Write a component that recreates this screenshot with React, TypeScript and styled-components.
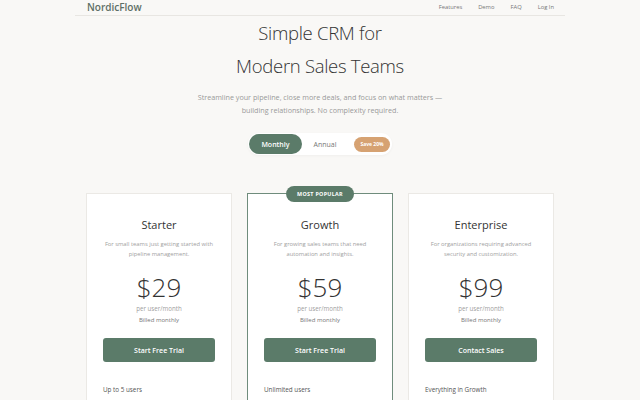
import React from "react";
import styled, { createGlobalStyle } from "styled-components";

const GlobalStyle = createGlobalStyle`
    * { box-sizing: border-box; }
    body {
        margin: 0;
        background: #f9f8f6;
        font-family: "Open Sans", "Noto Sans", sans-serif;
        color: #333;
    }
`;

interface IPlan {
    name: string,
    description: string,
    price: string,
    cta: string,
    feature: string,
    featured?: boolean
}

const plans: IPlan[] = [
    {
        name: "Starter",
        description: "For small teams just getting started with pipeline management.",
        price: "$29",
        cta: "Start Free Trial",
        feature: "Up to 5 users"
    },
    {
        name: "Growth",
        description: "For growing sales teams that need automation and insights.",
        price: "$59",
        cta: "Start Free Trial",
        feature: "Unlimited users",
        featured: true
    },
    {
        name: "Enterprise",
        description: "For organizations requiring advanced security and customization.",
        price: "$99",
        cta: "Contact Sales",
        feature: "Everything in Growth"
    }
];

const App: React.FC = () => {
    return (
        <>
            <GlobalStyle />
            <Page>
                <Nav>
                    <Logo>NordicFlow</Logo>
                    <NavLinks>
                        <NavLink>Features</NavLink>
                        <NavLink>Demo</NavLink>
                        <NavLink>FAQ</NavLink>
                        <NavLink>Log In</NavLink>
                    </NavLinks>
                </Nav>
                <Title>Simple CRM for<br />Modern Sales Teams</Title>
                <Subtitle>
                    Streamline your pipeline, close more deals, and focus on what matters —<br />
                    building relationships. No complexity required.
                </Subtitle>
                <Toggle>
                    <ToggleOption active>Monthly</ToggleOption>
                    <ToggleOption>Annual</ToggleOption>
                    <SaveBadge>Save 20%</SaveBadge>
                </Toggle>
                <Cards>
                    {plans.map((plan) => (
                        <Card key={plan.name} featured={plan.featured}>
                            {plan.featured && <PopularBadge>MOST POPULAR</PopularBadge>}
                            <PlanName>{plan.name}</PlanName>
                            <PlanDesc>{plan.description}</PlanDesc>
                            <Price>{plan.price}</Price>
                            <PriceUnit>per user/month</PriceUnit>
                            <Billed>Billed monthly</Billed>
                            <CtaButton>{plan.cta}</CtaButton>
                            <Feature>{plan.feature}</Feature>
                        </Card>
                    ))}
                </Cards>
            </Page>
        </>
    )
}

const Page = styled.div`
    display: flex;
    flex-direction: column;
    align-items: center;
    height: 400px;
    overflow: hidden;
`

const Nav = styled.nav`
    width: 490px;
    height: 17px;
    display: flex;
    align-items: center;
    justify-content: space-between;
    padding: 0 11px 1px 12px;
    border-bottom: 1px solid #e8e6e2;
`

const Logo = styled.div`
    font-size: 10px;
    font-weight: 600;
    color: #5e6f66;
`

const NavLinks = styled.div`
    display: flex;
    gap: 16px;
`

const NavLink = styled.span`
    font-size: 5.8px;
    color: #777;
`

const Title = styled.h1`
    margin: 0;
    font-size: 18.5px;
    font-weight: 300;
    line-height: 33px;
    text-align: center;
    color: #333;
    letter-spacing: -0.3px;
`

const Subtitle = styled.p`
    margin: 9px 0 0;
    font-size: 7.2px;
    line-height: 13px;
    text-align: center;
    color: #9a9a9a;
`

const Toggle = styled.div`
    margin-top: 16px;
    display: flex;
    align-items: center;
    height: 22px;
    padding: 1px 2px 1px 1px;
    background: #fff;
    border-radius: 11px;
    box-shadow: 0 1px 3px rgba(0, 0, 0, 0.04);
`

const ToggleOption = styled.div<{ active?: boolean }>`
    height: 20px;
    display: flex;
    align-items: center;
    justify-content: center;
    padding: 0 12px;
    border-radius: 10px;
    font-size: 7px;
    font-weight: ${(p) => (p.active ? 600 : 400)};
    color: ${(p) => (p.active ? "#fff" : "#777")};
    background: ${(p) => (p.active ? "#5b7b69" : "transparent")};
    min-width: ${(p) => (p.active ? "50px" : "0")};
`

const SaveBadge = styled.div`
    margin-left: 6px;
    height: 15px;
    display: flex;
    align-items: center;
    padding: 0 6px;
    border-radius: 8px;
    background: #d6a272;
    color: #fff;
    font-size: 5px;
    font-weight: 700;
`

const Cards = styled.div`
    margin-top: 38px;
    display: grid;
    grid-template-columns: repeat(3, 146px);
    gap: 15px;
`

const Card = styled.div<{ featured?: boolean }>`
    position: relative;
    display: flex;
    flex-direction: column;
    align-items: center;
    padding: 23px 16px 6px;
    background: #fff;
    border: 1px solid ${(p) => (p.featured ? "#6f8c7c" : "#ebe9e5")};
    height: 230px;
`

const PopularBadge = styled.div`
    position: absolute;
    top: -8px;
    left: 50%;
    transform: translateX(-50%);
    height: 16px;
    padding: 0 11px;
    display: flex;
    align-items: center;
    border-radius: 8px;
    background: #5b7b69;
    color: #fff;
    font-size: 5.4px;
    font-weight: 700;
    letter-spacing: 0.3px;
    white-space: nowrap;
`

const PlanName = styled.h2`
    margin: 0;
    font-size: 11px;
    font-weight: 400;
    line-height: 16px;
    color: #333;
`

const PlanDesc = styled.p`
    margin: 6px -4px 0;
    font-size: 5.8px;
    line-height: 10px;
    color: #a0a0a0;
    text-align: center;
`

const Price = styled.div`
    margin-top: 11px;
    font-size: 26px;
    font-weight: 300;
    line-height: 34px;
    color: #333;
`

const PriceUnit = styled.div`
    font-size: 6.2px;
    line-height: 10px;
    color: #a0a0a0;
`

const Billed = styled.div`
    margin-top: 1px;
    font-size: 6px;
    line-height: 10px;
    color: #777;
`

const CtaButton = styled.button`
    margin-top: 13px;
    width: 100%;
    height: 24px;
    border: none;
    border-radius: 3px;
    background: #5b7b69;
    color: #fff;
    font-family: inherit;
    font-size: 7px;
    font-weight: 600;
`

const Feature = styled.div`
    align-self: stretch;
    margin-top: 23px;
    padding-bottom: 6px;
    font-size: 6.3px;
    line-height: 10px;
    color: #555;
    border-bottom: 1px solid #ebe9e5;
`

export default App;
